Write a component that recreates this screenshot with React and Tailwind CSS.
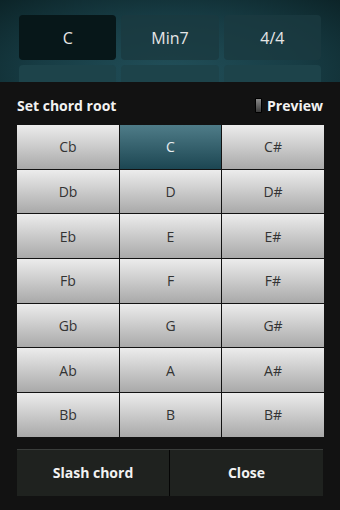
import React, { useState } from 'react';

const ROWS = [
  ['Cb', 'C', 'C#'],
  ['Db', 'D', 'D#'],
  ['Eb', 'E', 'E#'],
  ['Fb', 'F', 'F#'],
  ['Gb', 'G', 'G#'],
  ['Ab', 'A', 'A#'],
  ['Bb', 'B', 'B#'],
];

export default function App() {
  const [root, setRoot] = useState('C');
  const [preview, setPreview] = useState(false);

  return (
    <div className="w-[340px] h-[510px] overflow-hidden bg-[#121212] font-['Open_Sans','Noto_Sans',sans-serif]">
      {/* chord toolbar behind the dialog */}
      <div className="h-[82px] overflow-hidden bg-[radial-gradient(ellipse_at_50%_90%,#22505a_0%,#173c44_55%,#0c2428_100%)] px-[19px] pt-[15px]">
        <div className="grid grid-cols-3 gap-x-[5px] gap-y-[5px]">
          <div className="h-[45px] rounded-[4px] bg-[#071719] flex items-center justify-center text-[16px] text-[#e6e6e6]">{root}</div>
          <div className="h-[45px] rounded-[4px] bg-[#1a3a40]/80 flex items-center justify-center text-[16px] text-[#e6e6e6]">Min7</div>
          <div className="h-[45px] rounded-[4px] bg-[#1a3a40]/80 flex items-center justify-center text-[16px] text-[#e6e6e6]">4/4</div>
          <div className="h-[45px] rounded-[4px] bg-[#1d434a]" />
          <div className="h-[45px] rounded-[4px] bg-[#1d434a]" />
          <div className="h-[45px] rounded-[4px] bg-[#1d434a]" />
        </div>
      </div>

      <div className="px-[17px]">
        <div className="h-[43px] pt-[3px] flex items-center justify-between">
          <span className="text-[14px] font-bold text-[#f2f2f2]">Set chord root</span>
          <button className="flex items-center gap-[5px]" onClick={() => setPreview(!preview)}>
            <span className={`w-[7px] h-[15px] rounded-[1px] border border-[#000] ${preview ? 'bg-[linear-gradient(#9ad8e6,#3a8aa0)]' : 'bg-[linear-gradient(#8a8a8a,#3a3a3a)]'}`} />
            <span className="text-[14px] font-bold text-[#f2f2f2]">Preview</span>
          </button>
        </div>

        <div className="flex flex-col gap-[1px] bg-[#121212]">
          {ROWS.map((row, i) => (
            <div key={i} className="grid grid-cols-[102px_101px_102px] gap-[1px]">
              {row.map(n => (
                <button
                  key={n}
                  onClick={() => setRoot(n)}
                  className={`h-[43.7px] flex items-center justify-center text-[14px] ${
                    n === root
                      ? 'bg-[linear-gradient(#4f7c88,#1c4652)] text-[#e8eef0]'
                      : 'bg-[linear-gradient(#ececec,#a9a9a9)] text-[#333]'
                  }`}
                >
                  {n}
                </button>
              ))}
            </div>
          ))}
        </div>

        <div className="mt-[12px] h-[47px] flex border-t border-[#3a3d3b] bg-[#1f221f]">
          <button className="w-[153px] flex items-center justify-center text-[14px] font-bold text-[#f2f2f2] border-r border-[#050505]">Slash chord</button>
          <button className="flex-1 flex items-center justify-center text-[14px] font-bold text-[#f2f2f2]">Close</button>
        </div>
      </div>
    </div>
  );
}
